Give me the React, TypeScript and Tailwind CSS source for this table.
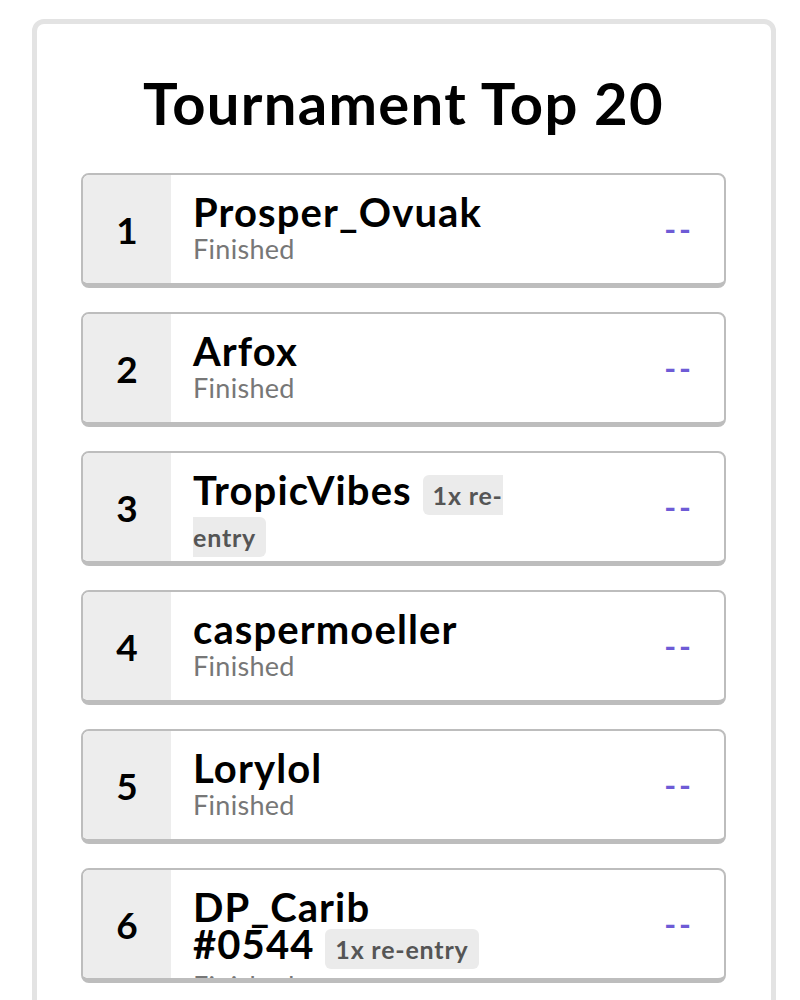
// Tournament leaderboard card: a bordered panel with a title and fixed-height
// rank rows. Long names wrap and the row clips whatever runs past its height.

type Entry = {
  rank: number;
  name: string;
  reentries?: number;
  status?: string;
};

const entries: Entry[] = [
  { rank: 1, name: "Prosper_Ovuak", status: "Finished" },
  { rank: 2, name: "Arfox", status: "Finished" },
  { rank: 3, name: "TropicVibes", reentries: 1, status: "Finished" },
  { rank: 4, name: "caspermoeller", status: "Finished" },
  { rank: 5, name: "Lorylol", status: "Finished" },
  // wraps after the tag in the original layout
  { rank: 6, name: "DP_Carib\n#0544", reentries: 1, status: "Finished" },
];

function Row({ entry }: { entry: Entry }) {
  return (
    <li className="flex h-[115px] overflow-hidden rounded-lg border-2 border-b-[5px] border-[#bdbdbd] bg-white">
      <div className="flex w-[88px] shrink-0 items-center justify-center bg-[#ededed] pt-[2px] text-[37px] font-bold text-black">
        {entry.rank}
      </div>
      <div className="w-[336px] shrink-0 pl-[22px] pt-[19px]">
        <div className="whitespace-pre-line text-[40px] leading-[37px] font-bold tracking-[1.1px] text-black">
          {entry.name}
          {entry.reentries ? (
            <>
              {" "}
              <span className="whitespace-normal rounded-md bg-[#ebebeb] px-[10px] py-[5px] text-[25px] font-bold tracking-[0.8px] text-[#555]">
                {entry.reentries}x re-entry
              </span>
            </>
          ) : null}
        </div>
        {entry.status && (
          <div className="text-[27px] leading-[35px] tracking-[0.3px] text-[#777]">{entry.status}</div>
        )}
      </div>
      <div className="ml-auto flex items-center pr-[30px] text-[32px] font-bold tracking-[3px] text-[#6e5bd6]">
        --
      </div>
    </li>
  );
}

export default function App() {
  return (
    <div className="min-h-screen bg-white pl-[32px] pr-[24px] pt-[19px] font-['Lato','Liberation_Sans',sans-serif]">
      <div className="rounded-xl border-[5px] border-[#e3e3e3] bg-white pb-[40px] pl-[44px] pr-[45px] pt-[47px]">
        <h1 className="text-center text-[58px] leading-[64px] font-bold tracking-[1.3px] text-black">
          Tournament Top 20
        </h1>
        <ol className="mt-[38px] flex flex-col gap-[24px]">
          {entries.map((e) => (
            <Row key={e.rank} entry={e} />
          ))}
        </ol>
      </div>
    </div>
  );
}
